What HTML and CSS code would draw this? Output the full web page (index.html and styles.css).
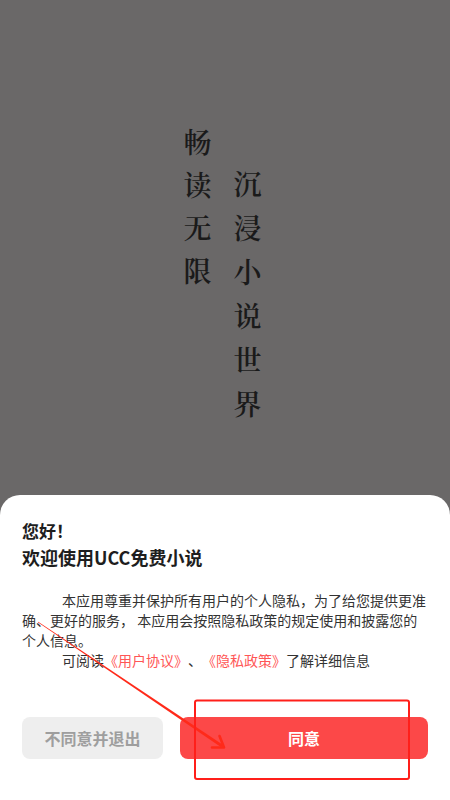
FILE: index.html
```html
<!DOCTYPE html>
<html lang="zh-CN">
<head>
<meta charset="utf-8">
<title>UCC免费小说</title>
<link rel="stylesheet" href="styles.css">
</head>
<body>
<div class="page">
  <section class="hero">
    <div class="slogan">
      <div class="col col-left">畅读无限</div>
      <div class="col col-right">沉浸小说世界</div>
    </div>
  </section>
  <section class="sheet">
    <h1 class="hello">您好！</h1>
    <h2 class="welcome">欢迎使用UCC免费小说</h2>
    <p class="para para-first">本应用尊重并保护所有用户的个人隐私，为了给您提供更准确、更好的服务， 本应用会按照隐私政策的规定使用和披露您的个人信息。</p>
    <p class="para">可阅读<span class="link">《用户协议》</span>、<span class="link">《隐私政策》</span>了解详细信息</p>
    <div class="actions">
      <button class="btn btn-decline">不同意并退出</button>
      <button class="btn btn-agree">同意</button>
    </div>
  </section>
  <svg class="annotation" width="450" height="800" viewBox="0 0 450 800" aria-hidden="true">
    <polygon points="37.8,622.3 38.2,621.7 222.8,744.8 221.2,747.3" fill="#ff2a1a"/>
    <polyline points="212,747.5 224,747.5 219.5,736" fill="none" stroke="#ff2a1a" stroke-width="2.6" stroke-linecap="round" stroke-linejoin="round"/>
    <rect x="195" y="700.5" width="214" height="78.5" rx="2" fill="none" stroke="#ff1f1a" stroke-width="2"/>
  </svg>
</div>
</body>
</html>
```

FILE: styles.css
```css
* { box-sizing: border-box; }
html, body { margin: 0; padding: 0; }
body {
  background: #6a6868;
  font-family: "Noto Sans CJK SC", "Noto Sans", sans-serif;
  text-spacing-trim: space-all;
}
.page {
  position: relative;
  width: 450px;
  height: 800px;
  display: flex;
  flex-direction: column;
  overflow: hidden;
}
.hero {
  flex: 1;
  display: flex;
  justify-content: center;
  padding-top: 128px;
  padding-right: 5px;
}
.slogan {
  display: flex;
  gap: 22px;
  align-items: flex-start;
}
.col {
  writing-mode: vertical-rl;
  font-family: "Noto Serif CJK SC", "Noto Sans CJK SC", serif;
  font-size: 28px;
  line-height: 28px;
  color: #1a1a1a;
  font-weight: 600;
}
.col-left { letter-spacing: 15px; }
.col-right { letter-spacing: 16px; margin-top: 42px; }

.sheet {
  background: #fff;
  border-radius: 20px 20px 0 0;
  padding: 23px 22px 41px;
}
.hello, .welcome {
  margin: 0;
  font-size: 17px;
  line-height: 26px;
  font-weight: 700;
  color: #1e1e1e;
}
.welcome { font-size: 18px; }
.para {
  margin: 0;
  font-size: 14px;
  line-height: 20px;
  color: #333;
  text-indent: 40px;
  text-spacing-trim: space-all;
}
.para-first { margin-top: 20px; }
.link { color: #ff5656; }
.actions {
  display: grid;
  grid-template-columns: 141px 1fr;
  gap: 17px;
  margin-top: 47px;
}
.btn {
  height: 42px;
  border: 0;
  border-radius: 8px;
  font-family: "Noto Sans CJK SC", sans-serif;
  font-size: 16px;
  font-weight: 700;
  padding: 0;
}
.btn-decline { background: #eeeeee; color: #9e9e9e; }
.btn-agree { background: #fc4848; color: #fff; }
.annotation {
  position: absolute;
  left: 0;
  top: 0;
  pointer-events: none;
}
```
